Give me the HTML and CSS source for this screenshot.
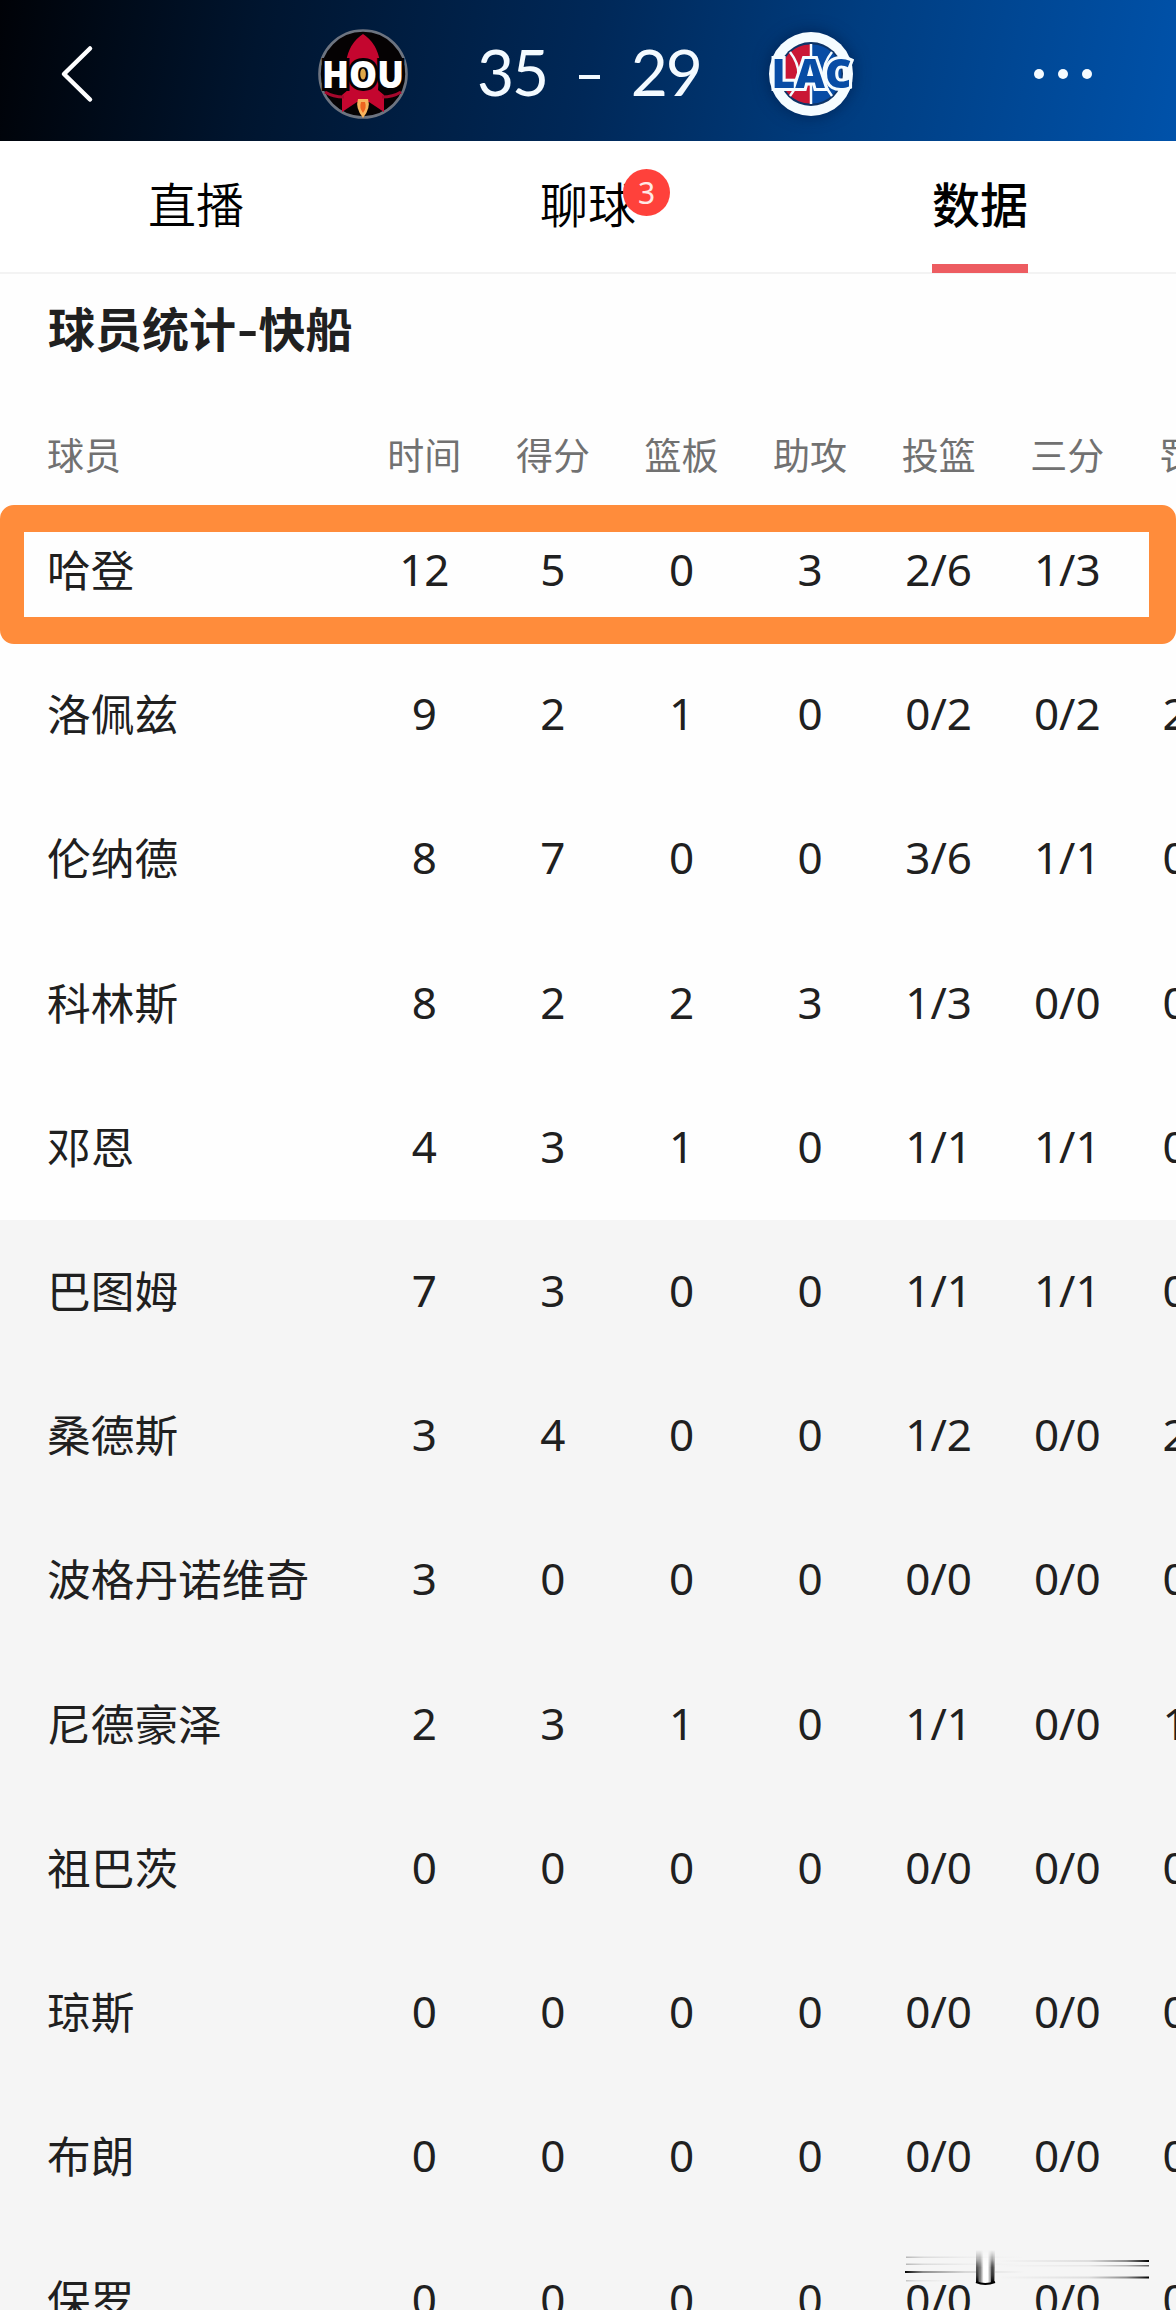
FILE: index.html
```html
<!DOCTYPE html>
<html lang="zh-CN">
<head>
<meta charset="utf-8">
	<title>球员统计</title>
	<link rel="stylesheet" href="styles.css">
</head>
<body>
	<div class="header">
		<svg class="back" width="36" height="60" viewBox="0 0 36 60"><path d="M31 4.500L5 30L31 55.500" fill="none" stroke="#fff" stroke-width="4.500" stroke-linecap="round" stroke-linejoin="round"/></svg>
		<svg class="logo_hou" width="92" height="92" viewBox="0 0 92 92">
			<circle cx="46" cy="46" r="43.500" fill="#050203" stroke="#6d7480" stroke-width="2.600"/>
			<path d="M46 6Q60 15 63 34L61 62L67 67V84L52 74H40L25 84V67L31 62L29 34Q32 15 46 6Z" fill="#c4062f"/>
			<path d="M8 64Q16 69 27 69M84 64Q76 69 65 69" fill="none" stroke="#a5082c" stroke-width="3"/>
			<path d="M41 71H51Q54 80 46 90Q38 80 41 71Z" fill="#f7b45c"/>
			<path d="M44 74H48Q50 80 46 85Q42 80 44 74Z" fill="#ed6420"/>
			<text x="46" y="59.500" text-anchor="middle" textLength="82" lengthAdjust="spacingAndGlyphs" class="hou_text">HOU</text>
			<ellipse cx="46" cy="46" rx="2.800" ry="5.500" fill="#dda84a"/>
		</svg>
		<div class="score"><span>35</span><i></i><span>29</span></div>
		<svg class="logo_lac" width="96" height="96" viewBox="0 0 96 96">
			<circle cx="48" cy="48" r="42" fill="#f5fcff"/>
			<circle cx="48" cy="48" r="32" fill="#0d3467"/>
			<path d="M47 18.500A29.500 29.500 0 0 0 47 77.500Z" fill="#ca1735"/>
			<path d="M49 18.500A29.500 29.500 0 0 1 49 77.500Z" fill="#074ca5"/>
			<path d="M48 18V78M27 26Q44 48 27 70M69 26Q52 48 69 70" fill="none" stroke="#f5fcff" stroke-width="2.500"/>
			<text x="48.500" y="62" text-anchor="middle" textLength="80" lengthAdjust="spacingAndGlyphs" class="lac_text">LAC</text>
		</svg>
		<svg class="more" width="60" height="12" viewBox="0 0 60 12" fill="#f5fbff"><circle cx="6" cy="6" r="5"/><circle cx="30" cy="6" r="5"/><circle cx="54" cy="6" r="5"/></svg>
	</div>

	<div class="tabs">
		<div class="tab"><span>直播</span></div>
		<div class="tab"><span>聊球<b class="badge">3</b></span></div>
		<div class="tab active"><span>数据</span></div>
	</div>

	<h2 class="title">球员统计<span>-</span>快船</h2>

	<div class="stats">
		<table>
			<colgroup><col class="name_col"><col span="7"></colgroup>
			<thead>
				<tr><th>球员</th><th>时间</th><th>得分</th><th>篮板</th><th>助攻</th><th>投篮</th><th>三分</th><th>罚球</th></tr>
			</thead>
			<tbody>
				<tr><th>哈登</th><td>12</td><td>5</td><td>0</td><td>3</td><td>2/6</td><td>1/3</td><td>0/0</td></tr>
				<tr><th>洛佩兹</th><td>9</td><td>2</td><td>1</td><td>0</td><td>0/2</td><td>0/2</td><td>2/2</td></tr>
				<tr><th>伦纳德</th><td>8</td><td>7</td><td>0</td><td>0</td><td>3/6</td><td>1/1</td><td>0/0</td></tr>
				<tr><th>科林斯</th><td>8</td><td>2</td><td>2</td><td>3</td><td>1/3</td><td>0/0</td><td>0/0</td></tr>
				<tr><th>邓恩</th><td>4</td><td>3</td><td>1</td><td>0</td><td>1/1</td><td>1/1</td><td>0/0</td></tr>
			</tbody>
			<tbody class="bench">
				<tr><th>巴图姆</th><td>7</td><td>3</td><td>0</td><td>0</td><td>1/1</td><td>1/1</td><td>0/0</td></tr>
				<tr><th>桑德斯</th><td>3</td><td>4</td><td>0</td><td>0</td><td>1/2</td><td>0/0</td><td>2/2</td></tr>
				<tr><th>波格丹诺维奇</th><td>3</td><td>0</td><td>0</td><td>0</td><td>0/0</td><td>0/0</td><td>0/0</td></tr>
				<tr><th>尼德豪泽</th><td>2</td><td>3</td><td>1</td><td>0</td><td>1/1</td><td>0/0</td><td>1/2</td></tr>
				<tr><th>祖巴茨</th><td>0</td><td>0</td><td>0</td><td>0</td><td>0/0</td><td>0/0</td><td>0/0</td></tr>
				<tr><th>琼斯</th><td>0</td><td>0</td><td>0</td><td>0</td><td>0/0</td><td>0/0</td><td>0/0</td></tr>
				<tr><th>布朗</th><td>0</td><td>0</td><td>0</td><td>0</td><td>0/0</td><td>0/0</td><td>0/0</td></tr>
				<tr><th>保罗</th><td>0</td><td>0</td><td>0</td><td>0</td><td>0/0</td><td>0/0</td><td>0/0</td></tr>
			</tbody>
		</table>
		<div class="mark"></div>
	</div>

	<svg class="smear" width="250" height="42" viewBox="0 0 250 42">
		<defs>
			<linearGradient id="toRight"><stop offset="0" stop-color="#333" stop-opacity="0"/><stop offset=".6" stop-color="#333" stop-opacity=".12"/><stop offset=".85" stop-color="#222" stop-opacity=".5"/><stop offset="1" stop-color="#000"/></linearGradient>
			<linearGradient id="toLeft"><stop offset="0" stop-color="#000"/><stop offset=".15" stop-color="#222" stop-opacity=".5"/><stop offset=".5" stop-color="#333" stop-opacity=".15"/><stop offset="1" stop-color="#333" stop-opacity="0"/></linearGradient>
			<linearGradient id="down" x1="0" y1="0" x2="0" y2="1"><stop offset="0" stop-color="#222" stop-opacity="0"/><stop offset=".7" stop-color="#222" stop-opacity=".7"/><stop offset="1" stop-color="#000"/></linearGradient>
			<linearGradient id="pipe"><stop offset="0" stop-color="#777"/><stop offset=".22" stop-color="#777"/><stop offset=".4" stop-color="#fff"/><stop offset=".62" stop-color="#fff"/><stop offset=".85" stop-color="#555"/><stop offset="1" stop-color="#aaa"/></linearGradient>
			<linearGradient id="fade" x1="0" y1="0" x2="0" y2="1"><stop offset="0" stop-color="#000"/><stop offset=".5" stop-color="#fff"/></linearGradient>
			<mask id="pipeMask"><rect x="72" y="2" width="22" height="35" fill="url(#fade)"/></mask>
		</defs>
		<rect x="3" y="8.500" width="120" height="1.500" fill="url(#toLeft)" opacity=".25"/>
		<rect x="3" y="15.500" width="120" height="1.500" fill="url(#toLeft)" opacity=".25"/>
		<rect x="2" y="23" width="120" height="2" fill="url(#toLeft)"/>
		<rect x="3" y="32" width="70" height="1.500" fill="url(#toLeft)" opacity=".2"/>
		<rect x="95" y="12" width="151" height="2" fill="url(#toRight)"/>
		<rect x="95" y="17" width="151" height="1.500" fill="url(#toRight)" opacity=".6"/>
		<rect x="95" y="28.500" width="151" height="2" fill="url(#toRight)"/>
		<path d="M73 2H92V34Q82 38 73 34Z" fill="url(#pipe)" mask="url(#pipeMask)"/>
		<path d="M73 34Q82 38 92 34" fill="none" stroke="#000" stroke-width="2"/>
		<rect x="73" y="12" width="2.500" height="22" fill="url(#down)"/>
		<rect x="88" y="12" width="3" height="22" fill="url(#down)"/>
	</svg>
</body>
</html>
```

FILE: styles.css
```css
body,h2,table,th,td{padding: 0;margin: 0;}
body{position: relative;width: 1176px;height: 2310px;overflow: hidden;background-color: #fefefe;color: #202020;font-family: "Noto Sans CJK SC",sans-serif;}
svg{display: block;flex: none;}

/* 顶部比分 */
.header{display: flex;align-items: center;box-sizing: border-box;height: 141px;padding: 7px 83px 0 59px;background: linear-gradient(100deg,#000207 0%,#00152f 22%,#002858 50%,#003d80 72%,#0052aa 100%);}
.logo_hou{margin-left: 222px;}
.hou_text{font: 800 37px "Open Sans",sans-serif;fill: #fff;stroke: #050203;stroke-width: 6px;paint-order: stroke;}
.score{display: flex;align-items: center;justify-content: space-between;width: 224px;margin: 0 62px 0 68px;color: #f3faff;font: 400 64px/70px Lato,sans-serif;letter-spacing: -2px;}
.score span{padding-bottom: 4px;}
.score i{width: 21px;height: 4px;margin-top: 6px;background-color: #f3faff;}
.logo_lac{filter: drop-shadow(0 0 8px rgba(0,20,60,.6));}
.lac_text{font: 800 40px "Open Sans",sans-serif;fill: #074ca5;stroke: #f5fcff;stroke-width: 6px;paint-order: stroke;}
.more{margin-left: auto;}

/* 标签栏 */
.tabs{display: flex;box-sizing: border-box;height: 133px;border-bottom: 2px solid #f3f3f3;background-color: #fff;color: #000;}
.tab{display: flex;flex: 1;justify-content: center;font-size: 48px;font-weight: 350;line-height: 122px;}
.tab span{position: relative;box-sizing: border-box;height: 132px;}
.tab.active{font-weight: 500;}
.active span{border-bottom: 9px solid #ed5c61;}
.badge{position: absolute;top: 28px;right: -34px;width: 47px;height: 47px;border-radius: 50%;background-color: #ff413b;color: #ffe9e6;font: 400 30px/47px "Noto Sans",sans-serif;text-align: center;}

.title{height: 138px;padding-left: 48px;font-size: 47px;font-weight: 700;line-height: 106px;}
.title span{display: inline-block;margin: 0 0 0 1px;transform: scaleX(1.25);padding: 0 2px;}

/* 数据表 */
.stats{position: relative;overflow: hidden;}
table{width: 1260.200px;border-collapse: collapse;table-layout: fixed;}
.name_col{width: 360px;}
tr{height: 144.200px;}
thead tr{height: 87px;}
tbody th{padding: 0 0 6px 47px;font-size: 43.700px;font-weight: 400;line-height: 60px;text-align: left;}
td{padding-bottom: 4px;font: 400 44px/60px "Noto Sans",sans-serif;text-align: center;}
thead th{padding-bottom: 2px;color: #717171;font-size: 37px;font-weight: 400;line-height: 85px;text-align: center;}
thead th:first-child{padding-left: 47px;text-align: left;}
.bench{background-color: #f5f5f5;}
.mark{position: absolute;top: 93px;left: 0;box-sizing: border-box;width: 1176px;height: 139px;border: solid #ff8c3b;border-width: 27px 27px 27px 24px;border-radius: 14px;}

.smear{position: absolute;top: 2248px;left: 903px;}
```
